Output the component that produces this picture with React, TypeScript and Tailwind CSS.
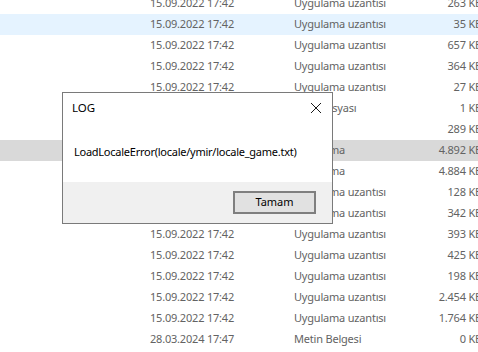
import React from "react";

type Row = { date: string; type: string; size: string; bg?: string };

const U = "Uygulama uzantısı";
const D = "15.09.2022 17:42";

const rows: Row[] = [
  { date: D, type: U, size: "263 KB" },
  { date: D, type: U, size: "35 KB", bg: "bg-[#e5f3ff]" },
  { date: D, type: U, size: "657 KB" },
  { date: D, type: U, size: "364 KB" },
  { date: D, type: U, size: "27 KB" },
  { date: D, type: "Ayar dosyası", size: "1 KB" },
  { date: D, type: "Dosya", size: "289 KB" },
  { date: D, type: "Uygulama", size: "4.892 KB", bg: "bg-[#d9d9d9]" },
  { date: D, type: "Uygulama", size: "4.884 KB" },
  { date: D, type: U, size: "128 KB" },
  { date: D, type: U, size: "342 KB" },
  { date: D, type: U, size: "393 KB" },
  { date: D, type: U, size: "425 KB" },
  { date: D, type: U, size: "198 KB" },
  { date: D, type: U, size: "2.454 KB" },
  { date: D, type: U, size: "1.764 KB" },
  { date: "28.03.2024 17:47", type: "Metin Belgesi", size: "0 KB" },
];

export default function App() {
  return (
    <div
      className="relative w-[478px] h-[352px] overflow-hidden bg-white"
      style={{ fontFamily: '"Noto Sans", "Open Sans", sans-serif' }}
    >
      <div className="mt-[-7px] flex flex-col">
        {rows.map((r, i) => (
          <div
            key={i}
            className={`flex h-[21px] items-center text-[11px] text-[#636363] tracking-[-0.2px] ${r.bg ?? ""}`}
          >
            <div className="w-[150px] shrink-0" />
            <div className="w-[144px] shrink-0 whitespace-nowrap">{r.date}</div>
            <div className="w-[100px] shrink-0 whitespace-nowrap">{r.type}</div>
            <div className="w-[88px] shrink-0 whitespace-nowrap text-right">{r.size}</div>
          </div>
        ))}
      </div>

      <div className="absolute left-[62px] top-[92px] w-[271px] h-[132px] flex flex-col border border-[#7a7a7a] bg-white text-black">
        <div className="flex h-[29px] items-center justify-between pl-[9px] pr-[9px] text-[11.5px]">
          <span>LOG</span>
          <svg width="12" height="12" viewBox="0 0 12 12" className="mr-[1px]">
            <path d="M1 1 L11 11 M11 1 L1 11" stroke="#1a1a1a" strokeWidth="1" />
          </svg>
        </div>
        <div className="flex flex-1 items-center pl-[11px]">
          <span className="whitespace-nowrap text-[11px] tracking-[-0.25px]">
            LoadLocaleError(locale/ymir/locale_game.txt)
          </span>
        </div>
        <div className="flex h-[41px] justify-end bg-[#f0f0f0] pt-[9px] pr-[16px]">
          <button className="h-[23px] w-[83px] border-2 border-[#7f7f7f] bg-[#e1e1e1] text-[11px] text-black">
            Tamam
          </button>
        </div>
      </div>
    </div>
  );
}
